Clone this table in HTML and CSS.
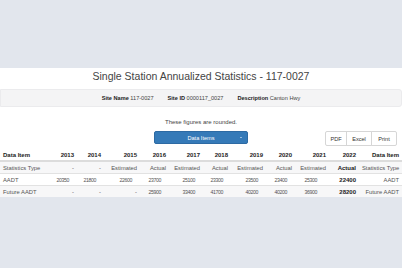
FILE: index.html
```html
<!DOCTYPE html>
<html lang="en">
<head>
<meta charset="utf-8">
<title>Single Station Annualized Statistics - 117-0027</title>
<link rel="stylesheet" href="styles.css">
</head>
<body>
<div class="page">
  <h1 class="title">Single Station Annualized Statistics - 117-0027</h1>
  <div class="infobar">
    <span class="field"><b>Site Name</b> 117-0027</span>
    <span class="field"><b>Site ID</b> 0000117_0027</span>
    <span class="field"><b>Description</b> Canton Hwy</span>
  </div>
  <p class="note">These figures are rounded.</p>
  <div class="toolbar">
    <div class="toolbar-center">
      <button class="btn-primary" type="button"><span class="btn-label">Data Items</span><span class="caret"></span></button>
    </div>
    <div class="toolbar-right">
      <div class="btn-group">
        <button class="btn" type="button">PDF</button>
        <button class="btn" type="button">Excel</button>
        <button class="btn" type="button">Print</button>
      </div>
    </div>
  </div>
  <table class="stats">
    <colgroup>
      <col class="c-label"><col class="c28"><col class="c27"><col class="c36"><col class="c29"><col class="c34"><col class="c28"><col class="c35"><col class="c29"><col class="c34"><col class="c30"><col class="c-last">
    </colgroup>
    <thead>
      <tr>
        <th class="left">Data Item</th><th>2013</th><th>2014</th><th>2015</th><th>2016</th><th>2017</th><th>2018</th><th>2019</th><th>2020</th><th>2021</th><th>2022</th><th>Data Item</th>
      </tr>
    </thead>
    <tbody>
      <tr class="striped">
        <td class="left">Statistics Type</td><td>-</td><td>-</td><td>Estimated</td><td>Actual</td><td>Estimated</td><td>Actual</td><td>Estimated</td><td>Actual</td><td>Estimated</td><td class="strong">Actual</td><td>Statistics Type</td>
      </tr>
      <tr>
        <td class="left">AADT</td><td><span class="n">20350</span></td><td><span class="n">21800</span></td><td><span class="n">22600</span></td><td><span class="n">23700</span></td><td><span class="n">25100</span></td><td><span class="n">23300</span></td><td><span class="n">23500</span></td><td><span class="n">23400</span></td><td><span class="n wide">25300</span></td><td class="strong">22400</td><td>AADT</td>
      </tr>
      <tr class="striped">
        <td class="left">Future AADT</td><td>-</td><td>-</td><td>-</td><td><span class="n">25900</span></td><td><span class="n">33400</span></td><td><span class="n">41700</span></td><td><span class="n">40200</span></td><td><span class="n">40200</span></td><td><span class="n wide">36900</span></td><td class="strong">28200</td><td>Future AADT</td>
      </tr>
    </tbody>
  </table>
</div>
</body>
</html>
```
FILE: styles.css
```css
html, body {
  margin: 0;
  padding: 0;
}
body {
  background: #e2e6ed;
  font-family: "Liberation Sans", Arial, sans-serif;
  color: #333;
}
.page {
  margin-top: 68px;
  background: #fff;
  padding-top: 2px;
}
.title {
  margin: 0;
  font-size: 10.5px;
  line-height: 12px;
  font-weight: normal;
  text-align: center;
  color: #444;
}
.infobar {
  margin-top: 7px;
  height: 18px;
  box-sizing: border-box;
  display: flex;
  align-items: center;
  justify-content: center;
  gap: 14px;
  background: #f4f4f5;
  border: 1px solid #ebebed;
  border-radius: 0 3px 3px 0;
  font-size: 5.6px;
  color: #444;
}
.infobar b {
  color: #222;
}
.note {
  margin: 11px 0 0;
  font-size: 6px;
  line-height: 9px;
  text-align: center;
  color: #444;
}
.toolbar {
  margin-top: 4px;
  display: grid;
  grid-template-columns: 1fr auto 1fr;
  align-items: start;
}
.toolbar-center {
  grid-column: 2;
}
.toolbar-right {
  grid-column: 3;
  display: flex;
  justify-content: flex-end;
  padding-right: 5px;
}
.btn-primary {
  width: 94px;
  height: 13px;
  box-sizing: border-box;
  margin: 0;
  padding: 0;
  display: grid;
  grid-template-columns: 1fr auto 1fr;
  align-items: center;
  background: #357ab8;
  border: 1px solid #2d6aa3;
  border-radius: 2px;
  color: #fff;
  font-family: "Liberation Sans", Arial, sans-serif;
  font-size: 5.6px;
}
.btn-label {
  grid-column: 2;
}
.caret {
  grid-column: 3;
  justify-self: end;
  margin-right: 5px;
  width: 0;
  height: 0;
  border-left: 1.5px solid transparent;
  border-right: 1.5px solid transparent;
  border-top: 1.5px solid #fff;
}
.btn-group {
  display: flex;
}
.btn {
  height: 15px;
  box-sizing: border-box;
  margin: 0 0 0 -1px;
  padding: 0;
  background: #fff;
  border: 1px solid #d6d6d6;
  color: #333;
  font-family: "Liberation Sans", Arial, sans-serif;
  font-size: 5.6px;
}
.btn:first-child {
  margin-left: 0;
  border-radius: 2px 0 0 2px;
  width: 22px;
}
.btn:nth-child(2) {
  width: 26px;
}
.btn:last-child {
  border-radius: 0 2px 2px 0;
  width: 26px;
}
.stats {
  margin-top: 3px;
  width: 100%;
  table-layout: fixed;
  border-collapse: collapse;
  font-size: 5.8px;
}
.c-label { width: 49px; }
.c27 { width: 27px; }
.c28 { width: 28px; }
.c29 { width: 29px; }
.c30 { width: 30px; }
.c34 { width: 34px; }
.c35 { width: 35px; }
.c36 { width: 36px; }
.c-last { width: 43px; }
.stats th,
.stats td {
  padding: 0 3px;
  text-align: right;
  white-space: nowrap;
  overflow: hidden;
}
.stats th {
  height: 11px;
  font-size: 6px;
  font-weight: bold;
  color: #222;
  border-bottom: 2px solid #dcdcdc;
}
.stats td {
  height: 11px;
  border-top: 1px solid #e2e2e2;
  color: #555;
}
.stats .left {
  text-align: left;
}
.stats tr.striped td {
  background: #f7f7f8;
}
.stats td.strong {
  font-weight: bold;
  font-size: 6px;
  color: #222;
}
.n {
  font-size: 5.2px;
  letter-spacing: -0.4px;
  padding-right: 5px;
}
.n.wide {
  padding-right: 9px;
}
```
